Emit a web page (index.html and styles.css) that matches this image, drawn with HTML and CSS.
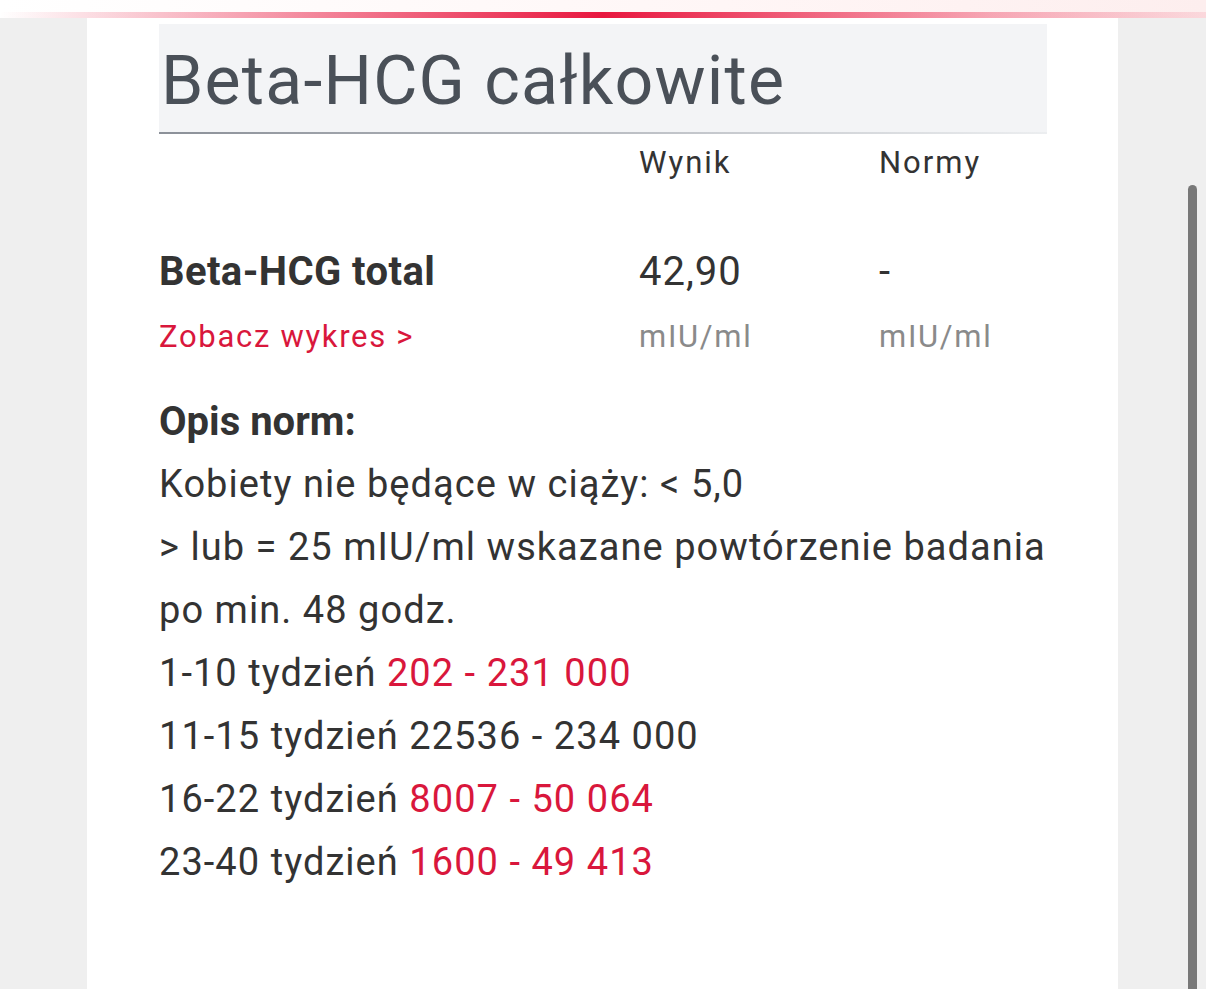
FILE: index.html
```html
<!DOCTYPE html>
<html lang="pl">
<head>
<meta charset="utf-8">
<link rel="stylesheet" href="styles.css">
</head>
<body>
<div class="topbar"><div class="topline"></div></div>
<div class="page">
  <main class="card">
    <div class="head"><h1 class="title">Beta-HCG całkowite</h1></div>
    <div class="grid">
      <div class="cell"></div>
      <div class="cell colhead">Wynik</div>
      <div class="cell colhead">Normy</div>

      <div class="cell name">Beta-HCG total</div>
      <div class="cell val">42,90</div>
      <div class="cell val">-</div>

      <div class="cell"><a class="link" href="#">Zobacz wykres &gt;</a></div>
      <div class="cell unit">mIU/ml</div>
      <div class="cell unit">mIU/ml</div>
    </div>
    <div class="desc">
      <div class="desc-title">Opis norm:</div>
      <p class="line">Kobiety nie będące w ciąży: &lt; 5,0</p>
      <p class="line">&gt; lub = 25 mIU/ml wskazane powtórzenie badania po min. 48 godz.</p>
      <p class="line">1-10 tydzień <span class="red">202 - 231 000</span></p>
      <p class="line">11-15 tydzień 22536 - 234 000</p>
      <p class="line">16-22 tydzień <span class="red">8007 - 50 064</span></p>
      <p class="line">23-40 tydzień <span class="red">1600 - 49 413</span></p>
    </div>
  </main>
  <div class="scrollbar"></div>
</div>
</body>
</html>
```
FILE: styles.css
```css
html, body {
  margin: 0;
  padding: 0;
  height: 100%;
  overflow: hidden;
}
body {
  background: #efefef;
  font-family: Roboto, "Liberation Sans", sans-serif;
  color: #333333;
}
.topbar {
  height: 18px;
  background: linear-gradient(90deg, #ffffff 0%, #fff6f6 60%, #fdeeee 100%);
  position: relative;
}
.topline {
  position: absolute;
  left: 0;
  right: 0;
  top: 12px;
  height: 6px;
  background: linear-gradient(90deg, rgba(232,23,63,0) 0%, rgba(232,23,63,0.35) 18%, #e8173f 50%, rgba(232,23,63,0.35) 82%, rgba(232,23,63,0.1) 100%);
}
.page {
  position: relative;
  display: flex;
  height: calc(100% - 18px);
}
.card {
  background: #ffffff;
  margin-left: 87px;
  width: 1031px;
  box-sizing: border-box;
  padding: 6px 71px 0 72px;
}
.head {
  background: #f3f4f6;
  height: 110px;
  box-sizing: border-box;
  border-bottom: 2px solid;
  border-image: linear-gradient(90deg, #8b9098, #c3c6cb 60%, #eceef0) 1;
}
.title {
  margin: 0;
  font-weight: 400;
  font-size: 68px;
  padding: 6px 0 0 2px;
  line-height: 102px;
  color: #4a5058;
  letter-spacing: 1.2px;
}
.grid {
  display: grid;
  grid-template-columns: 480px 240px 1fr;
  grid-template-rows: 113px 65px 50px;
}
.cell {
  font-size: 31px;
}
.colhead {
  line-height: 58px;
  letter-spacing: 2px;
  color: #333;
}
.name {
  font-weight: 700;
  font-size: 40px;
  line-height: 50px;
  letter-spacing: 0.4px;
}
.val {
  font-size: 40px;
  line-height: 50px;
  letter-spacing: 1px;
}
.unit {
  color: #8a8a8a;
  font-size: 31px;
  line-height: 50px;
  letter-spacing: 1.7px;
}
.link {
  color: #d9173c;
  text-decoration: none;
  font-size: 31px;
  line-height: 50px;
  letter-spacing: 1.7px;
}
.desc {
  margin-top: 28px;
  margin-right: -10px;
}
.desc-title {
  font-weight: 700;
  font-size: 40px;
  line-height: 63px;
}
.line {
  margin: 0;
  font-size: 38px;
  line-height: 63px;
  letter-spacing: 1.05px;
}
.red {
  color: #d9173c;
}
.scrollbar {
  position: absolute;
  left: 1188px;
  top: 167px;
  width: 9px;
  bottom: 0;
  background: #787878;
  border-radius: 5px 5px 0 0;
}
```
